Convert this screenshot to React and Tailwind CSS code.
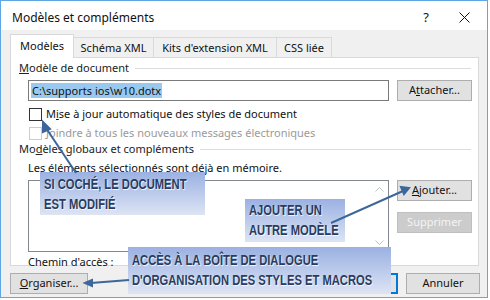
import React from "react";

const btn = "h-[21px] border border-[#adadad] bg-[#e1e1e1] text-[11px] text-[#111] flex items-center justify-center";
const tab = "h-[21px] border border-[#d9d9d9] border-l-0 border-b-0 flex items-center justify-center text-[11px] text-[#111] whitespace-nowrap";

function GroupTitle({ children }) {
    return (
        <div className="flex items-center h-[16px] pl-[8px] pr-[7px]">
            <span className="text-[11px] text-[#222] whitespace-nowrap">{children}</span>
            <div className="flex-1 h-px bg-[#dcdcdc] ml-[6px]" />
        </div>
    );
}

function Check({ disabled, children }) {
    return (
        <div className="flex items-center h-[14px] pl-[18px]">
            <div className={`w-[13px] h-[13px] border bg-white ${disabled ? "border-[#cccccc]" : "border-[#333]"}`} />
            <span className={`ml-[4px] text-[11px] whitespace-nowrap ${disabled ? "text-[#9a9a9a]" : "text-[#111]"}`}>{children}</span>
        </div>
    );
}

function Note({ className, lines }) {
    return (
        <div className={`absolute bg-gradient-to-b from-[#9bb1e2] to-[#dde4f4] px-[4px] font-['Liberation_Sans',Arial,sans-serif] font-bold text-[14px] leading-[20px] text-[#2b3c5e] [text-shadow:1px_1px_1px_rgba(255,255,255,0.9)] whitespace-nowrap ${className}`}>
            {lines.map((l) => (
                <div key={l} className="origin-left scale-x-[0.8]">{l}</div>
            ))}
        </div>
    );
}

export default function App() {
    return (
        <div className="relative w-[488px] h-[298px] border border-[#5ea6e6] bg-[#f0f0f0] font-['Noto_Sans',sans-serif] overflow-hidden">
            {/* title bar */}
            <div className="h-[29px] bg-white flex items-center pl-[11px] pt-[4px] text-[12px] text-[#111]">
                <span className="flex-1">Modèles et compléments</span>
                <span className="w-[30px] text-center text-[13px]">?</span>
                <span className="w-[46px] flex justify-center">
                    <svg width="11" height="11" viewBox="0 0 11 11"><path d="M0.5 0.5 L10.5 10.5 M10.5 0.5 L0.5 10.5" stroke="#111" strokeWidth="1" /></svg>
                </span>
            </div>

            {/* tabs */}
            <div className="flex items-end h-[28px] pl-[9px]">
                <div className="relative z-10 h-[24px] w-[64px] bg-white border border-[#d9d9d9] border-b-0 flex items-center justify-center text-[11px] text-[#111]">Modèles</div>
                <div className={`${tab} w-[80px]`}>Schéma XML</div>
                <div className={`${tab} w-[123px]`}>Kits d'extension XML</div>
                <div className={`${tab} w-[55px]`}>CSS liée</div>
            </div>

            {/* panel */}
            <div className="ml-[9px] w-[469px] h-[209px] -mt-px bg-white border border-[#d9d9d9] flex flex-col pt-[2px]">
                <GroupTitle><u>M</u>odèle de document</GroupTitle>
                <div className="flex mt-[4px] pl-[17px]">
                    <div className="w-[361px] h-[21px] border border-[#7a7a7a] flex items-center pl-[2px]">
                        <span className="bg-[#99c9ef] text-[11px] leading-[15px] text-[#111] px-px">C:\supports ios\w10.dotx</span>
                    </div>
                    <div className={`${btn} ml-[8px] w-[75px]`}>A<u>t</u>tacher...</div>
                </div>
                <div className="mt-[6px]"><Check>M<u>i</u>se à jour automatique des styles de document</Check></div>
                <div className="mt-[5px]"><Check disabled>Joindre à tous les nouveaux messages électroniques</Check></div>
                <div className="mt-[1px]"><GroupTitle>Mo<u>d</u>èles globaux et compléments</GroupTitle></div>
                <div className="pl-[17px] mt-[3px] h-[16px] text-[11px] text-[#111] flex items-center">Les éléments sélectionnés sont déjà en mémoire.</div>
                <div className="flex pl-[17px] mt-[4px]">
                    <div className="w-[361px] h-[72px] border border-[#828790] flex justify-end">
                        <div className="w-[17px] flex flex-col justify-between items-center py-[6px]">
                            <svg width="9" height="5" viewBox="0 0 9 5"><path d="M0.5 4.5 L4.5 0.5 L8.5 4.5" fill="none" stroke="#bfbfbf" /></svg>
                            <svg width="9" height="5" viewBox="0 0 9 5"><path d="M0.5 0.5 L4.5 4.5 L8.5 0.5" fill="none" stroke="#bfbfbf" /></svg>
                        </div>
                    </div>
                    <div className="ml-[8px] flex flex-col gap-[11px]">
                        <div className={`${btn} w-[75px]`}><u>A</u>jouter...</div>
                        <div className="h-[21px] w-[75px] border border-[#bfbfbf] bg-[#cccccc] text-[11px] text-[#f4f4f4] flex items-center justify-center">Supprimer</div>
                    </div>
                </div>
                <div className="pl-[17px] mt-[2px] h-[16px] text-[11px] text-[#111] flex items-center">Chemin d'accès :</div>
            </div>

            {/* bottom buttons */}
            <div className="flex mt-[7px] pl-[9px] pr-[7px]">
                <div className={`${btn} w-[78px]`}><u>O</u>rganiser...</div>
                <div className="flex-1" />
                <div className="h-[21px] w-[75px] border-2 border-[#0078d7] bg-[#e1e1e1]" />
                <div className={`${btn} w-[74px] ml-[8px]`}>Annuler</div>
            </div>

            {/* annotations */}
            <Note className="left-[39px] top-[171px] w-[165px] h-[43px] pt-[2px]" lines={["SI COCHÉ, LE DOCUMENT", "EST MODIFIÉ"]} />
            <Note className="left-[244px] top-[198px] w-[100px] h-[43px] pt-[1px]" lines={["AJOUTER UN", "AUTRE MODÈLE"]} />
            <Note className="left-[127px] top-[246px] w-[263px] h-[47px] pt-[3px]" lines={["ACCÈS À LA BOÎTE DE DIALOGUE", "D'ORGANISATION DES STYLES ET MACROS"]} />

            <svg className="absolute left-0 top-0 pointer-events-none" width="488" height="298" viewBox="0 0 488 298">
                <g stroke="#3d6699" strokeWidth="2" fill="#3d6699">
                    <line x1="75" y1="172" x2="45" y2="127" />
                    <path d="M42 121 L49 128 L42 131 Z" />
                    <line x1="330" y1="222" x2="402" y2="190" />
                    <path d="M408 187 L400 186 L403 193 Z" />
                    <line x1="128" y1="279" x2="90" y2="282" />
                    <path d="M84 282 L91 279 L91 285 Z" />
                </g>
            </svg>
        </div>
    );
}
